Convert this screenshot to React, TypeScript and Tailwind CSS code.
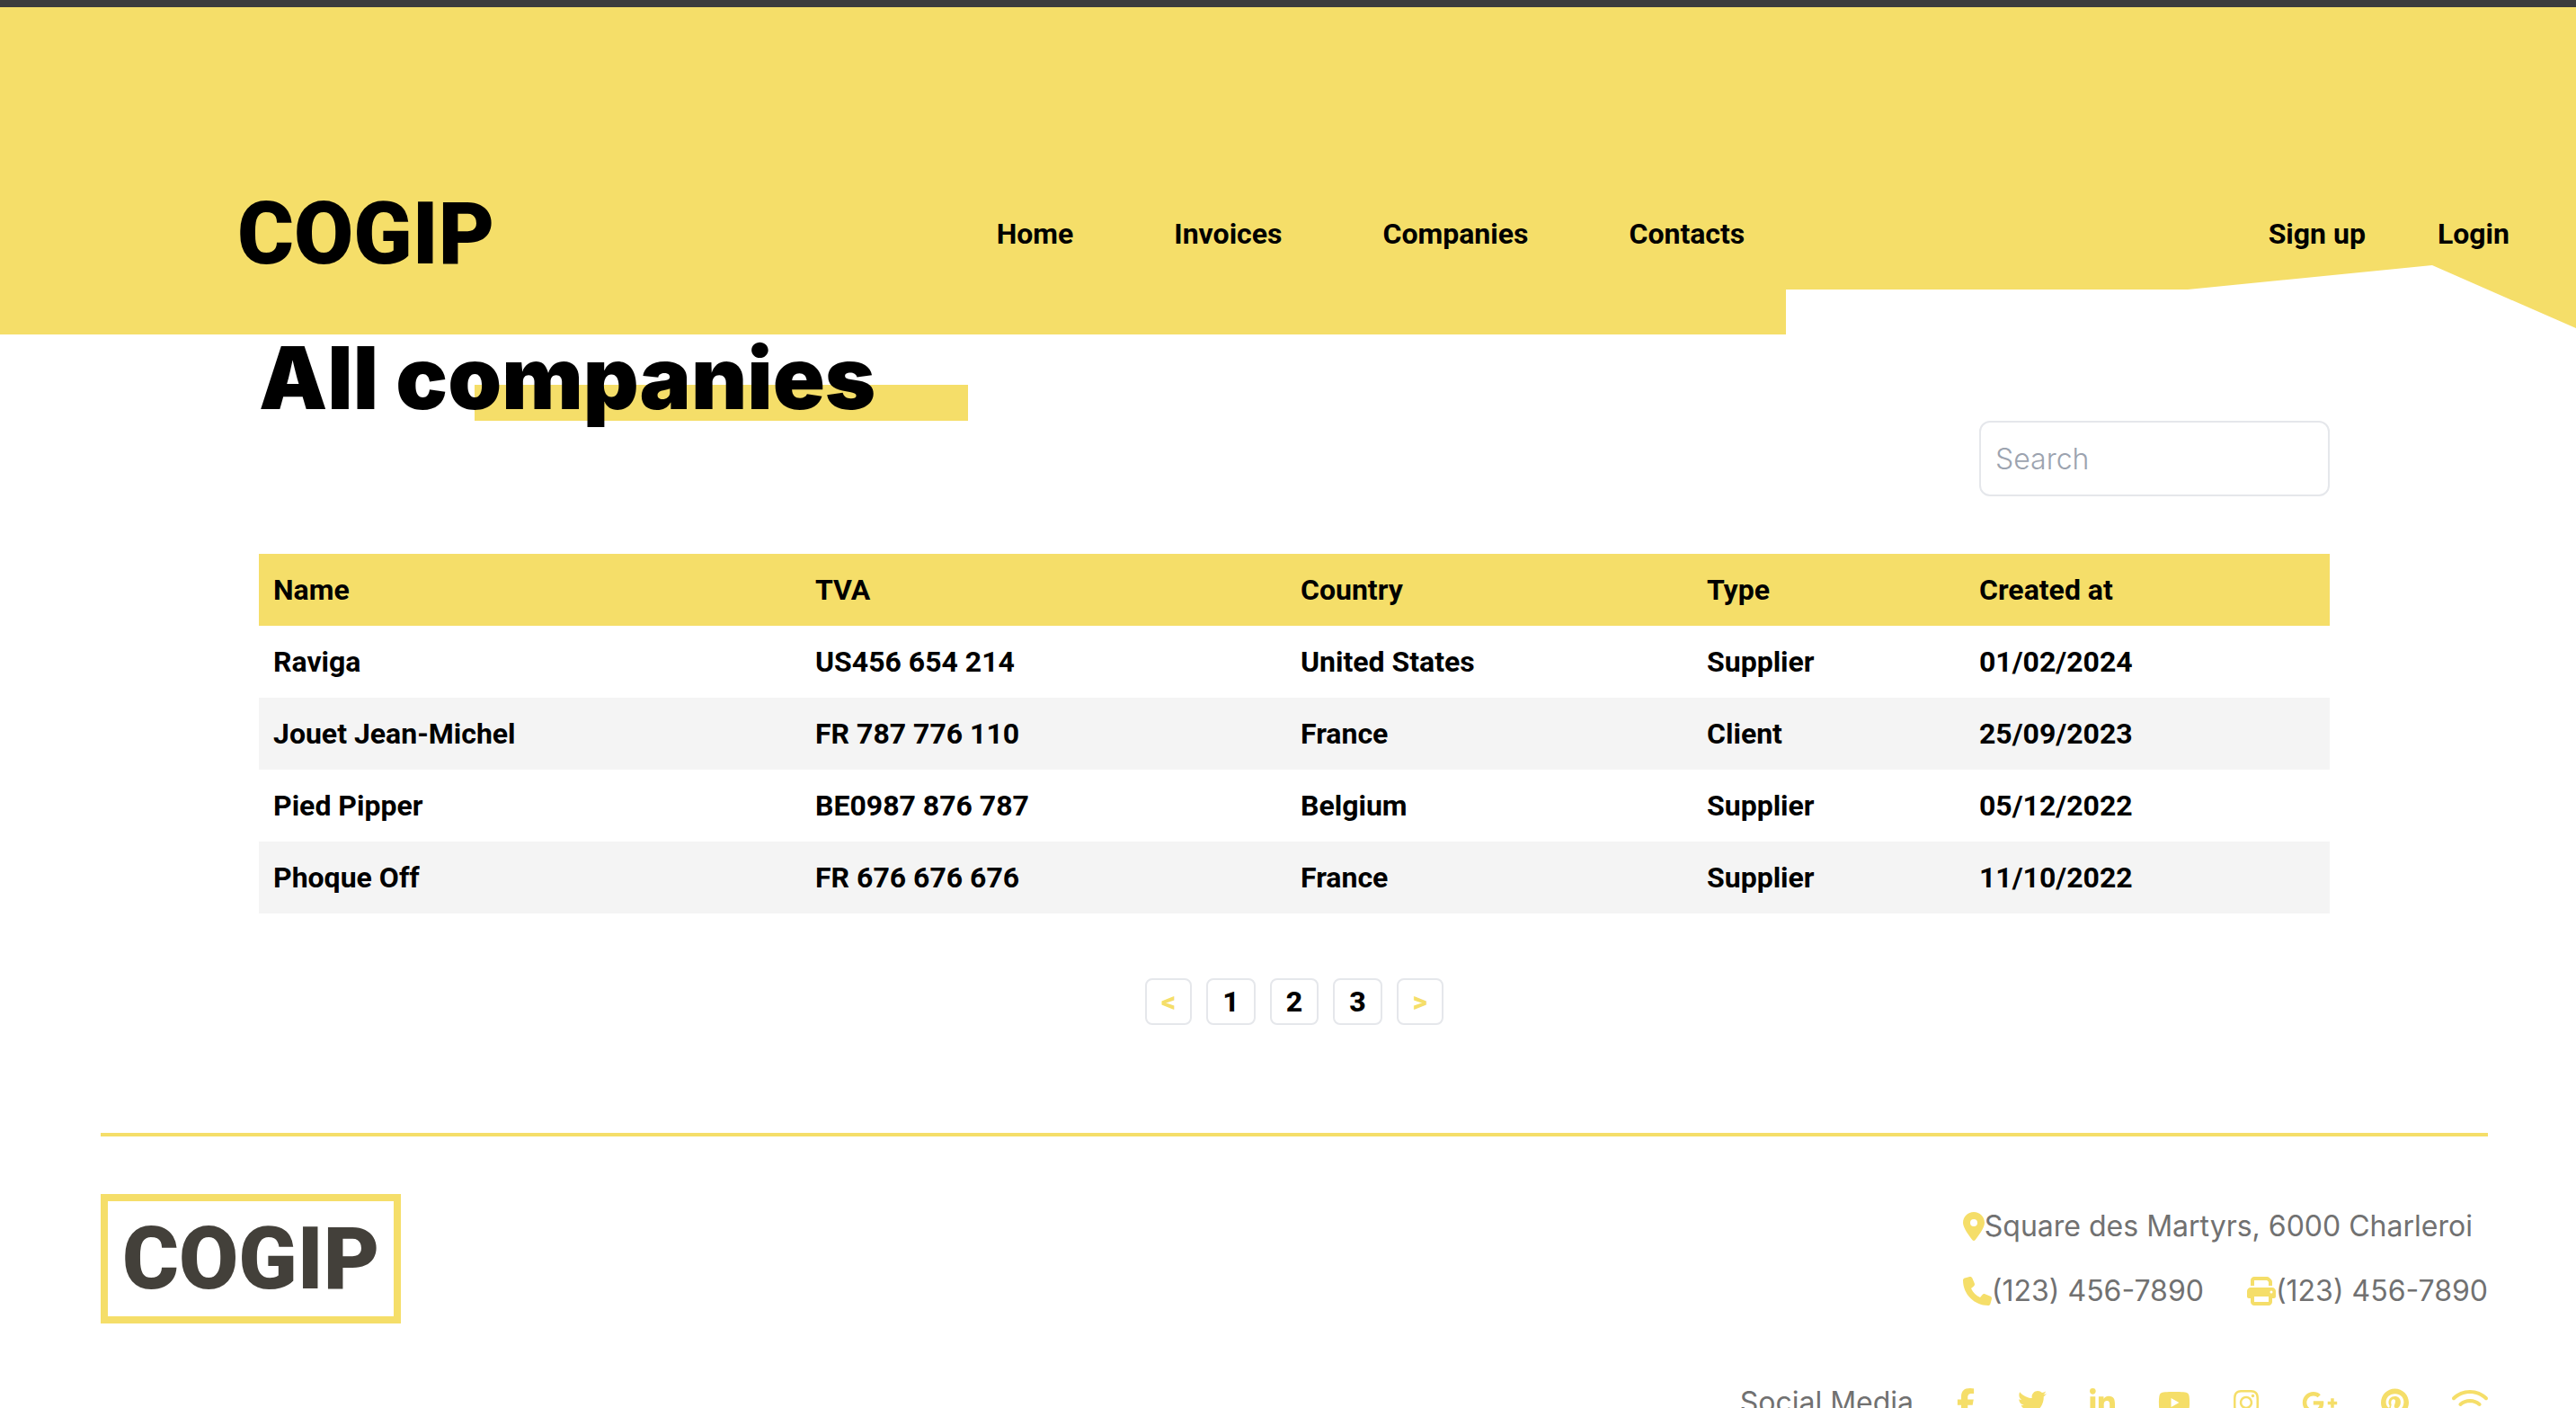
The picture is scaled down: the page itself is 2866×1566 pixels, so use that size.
import React from "react";
import {
  FaFacebookF,
  FaTwitter,
  FaLinkedinIn,
  FaYoutube,
  FaInstagram,
  FaGooglePlusG,
  FaPinterest,
  FaWifi,
  FaLocationDot,
  FaPhone,
  FaPrint,
} from "react-icons/fa6";

const navLinks = ["Home", "Invoices", "Companies", "Contacts"];
const accountLinks = ["Sign up", "Login"];

const columns = [
  { label: "Name", width: "w-[603px]" },
  { label: "TVA", width: "w-[540px]" },
  { label: "Country", width: "w-[452px]" },
  { label: "Type", width: "w-[303px]" },
  { label: "Created at", width: "w-[406px]" },
];

const companies = [
  ["Raviga", "US456 654 214", "United States", "Supplier", "01/02/2024"],
  ["Jouet Jean-Michel", "FR 787 776 110", "France", "Client", "25/09/2023"],
  ["Pied Pipper", "BE0987 876 787", "Belgium", "Supplier", "05/12/2022"],
  ["Phoque Off", "FR 676 676 676", "France", "Supplier", "11/10/2022"],
];

const socials = [
  { name: "Facebook", Icon: FaFacebookF, size: "h-8 w-5" },
  { name: "Twitter", Icon: FaTwitter, size: "h-8 w-8" },
  { name: "LinkedIn", Icon: FaLinkedinIn, size: "h-8 w-7" },
  { name: "YouTube", Icon: FaYoutube, size: "h-8 w-9" },
  { name: "Instagram", Icon: FaInstagram, size: "h-8 w-7" },
  { name: "Google Plus", Icon: FaGooglePlusG, size: "h-8 w-10" },
  { name: "Pinterest", Icon: FaPinterest, size: "h-8 w-[31px]" },
  { name: "Feed", Icon: FaWifi, size: "h-8 w-10" },
];

function Header() {
  return (
    <header className="relative h-[372px] border-t-8 border-[#3c3c3c] bg-[#f5de69] font-bold">
      <svg
        className="absolute right-0 bottom-0 h-[77px] w-[879px] text-white"
        viewBox="0 0 879 77"
        fill="currentColor"
        aria-hidden="true"
      >
        <path d="M0 27H447L719 0L879 70V77H0Z" />
      </svg>
      <div className="relative flex items-center justify-between pt-[204px] pr-[74px] pl-[264px]">
        <a href="#" className="text-8xl leading-none font-black">
          COGIP
        </a>
        <nav className="flex gap-28 text-[32px] leading-12">
          {navLinks.map((label) => (
            <a key={label} href="#">
              {label}
            </a>
          ))}
        </nav>
        <div className="flex gap-20 pl-6 text-[32px] leading-12">
          {accountLinks.map((label) => (
            <a key={label} href="#">
              {label}
            </a>
          ))}
        </div>
      </div>
    </header>
  );
}

function Companies() {
  return (
    <main className="pr-[274px] pl-72">
      <div className="relative flex">
        <div className="absolute top-14 left-60 h-10 w-[549px] bg-[#f5de69]" />
        <h1 className="relative font-[Inter,sans-serif] text-8xl leading-none font-black">
          All companies
        </h1>
      </div>
      <div className="flex justify-end">
        <input
          type="search"
          aria-label="Search"
          placeholder="Search"
          className="h-[84px] w-[390px] rounded-xl border-2 border-gray-200 px-4 font-[Inter,sans-serif] text-[32px] font-light placeholder:text-[#9ca3af]"
        />
      </div>
      <table className="mt-16 w-full table-fixed text-left text-[32px] leading-12 font-bold">
        <thead className="bg-[#f5de69]">
          <tr>
            {columns.map(({ label, width }) => (
              <th key={label} scope="col" className={width + " p-4"}>
                {label}
              </th>
            ))}
          </tr>
        </thead>
        <tbody>
          {companies.map((row) => (
            <tr key={row[0]} className="even:bg-[#f4f4f4]">
              {row.map((cell, i) => (
                <td key={i} className="p-4">
                  {cell}
                </td>
              ))}
            </tr>
          ))}
        </tbody>
      </table>
      <nav
        aria-label="Pagination"
        className="mt-[72px] flex justify-center gap-4 text-[32px] leading-12 font-extrabold"
      >
        {["<", "1", "2", "3", ">"].map((label) => (
          <button
            key={label}
            type="button"
            className={
              label === "<" || label === ">"
                ? "rounded-lg border-2 border-gray-200 px-4 text-[#f5de69]"
                : "rounded-lg border-2 border-gray-200 px-4"
            }
          >
            {label}
          </button>
        ))}
      </nav>
    </main>
  );
}

function Footer() {
  return (
    <footer className="mt-[120px] mr-[98px] ml-28 border-t-4 border-[#f5de69] pt-16 font-[Inter,sans-serif] text-[32px] leading-12 text-[#717171]">
      <div className="flex items-start justify-between">
        <a
          href="#"
          className="border-8 border-[#f5de69] p-4 font-[Roboto,sans-serif] text-8xl leading-none font-black text-[#43403a]"
        >
          COGIP
        </a>
        <address className="flex flex-col gap-6 pt-3 not-italic">
          <p className="flex items-center">
            <FaLocationDot className="h-8 w-6 text-[#f5de69]" />
            Square des Martyrs, 6000 Charleroi
          </p>
          <div className="flex gap-12">
            <p className="flex items-center">
              <FaPhone className="h-8 w-8 text-[#f5de69]" />
              (123) 456-7890
            </p>
            <p className="flex items-center">
              <FaPrint className="h-8 w-8 text-[#f5de69]" />
              (123) 456-7890
            </p>
          </div>
        </address>
      </div>
      <div className="mt-16 flex items-center justify-end gap-12">
        <span>Social Media</span>
        {socials.map(({ name, Icon, size }) => (
          <a key={name} href="#" aria-label={name} className="text-[#f5de69]">
            <Icon className={size} />
          </a>
        ))}
      </div>
    </footer>
  );
}

export default function App() {
  return (
    <div className="min-h-screen bg-white font-[Roboto,sans-serif] text-black">
      <Header />
      <Companies />
      <Footer />
    </div>
  );
}
